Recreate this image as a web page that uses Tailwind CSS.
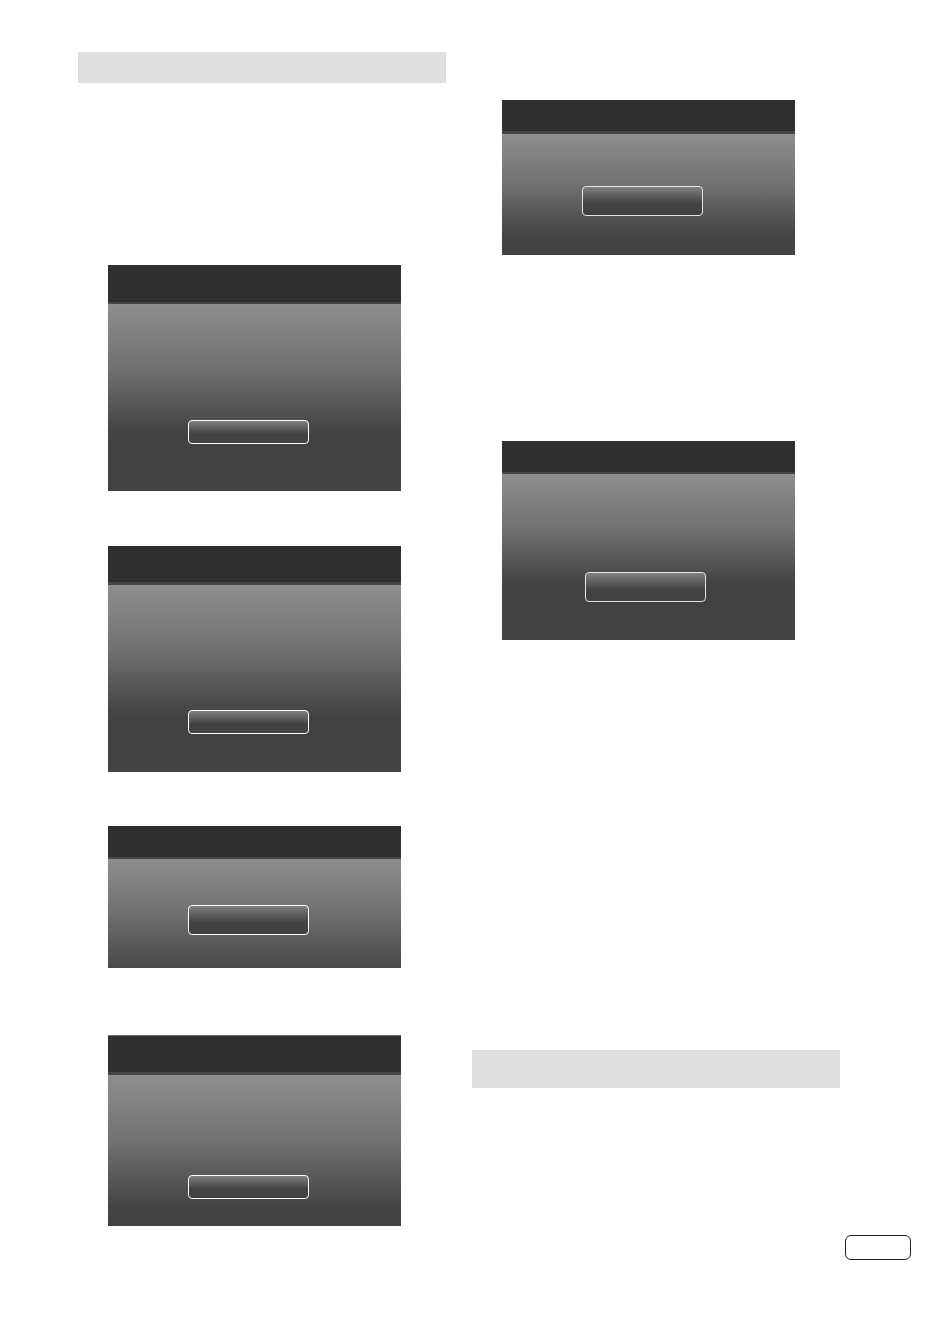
<!DOCTYPE html>
<html lang="en">
<head>
    <meta charset="UTF-8">
    <meta name="viewport" content="width=device-width, initial-scale=1.0">
    <title>Manual page</title>
    <script src="https://cdn.jsdelivr.net/npm/@tailwindcss/browser@4"></script>
</head>
<body class="bg-white text-black font-['Liberation_Sans',sans-serif]">

    <main class="grid grid-cols-2 gap-[26px] pt-[52px] pl-[78px] pr-[93px]">

        <!-- Left column -->
        <div>
            <!-- Section heading bar -->
            <div class="h-[31px] bg-[#dfdfdf]"></div>

            <section class="mt-[182px] ml-[30px] mr-[45px] bg-[#424242]">
                <header class="h-[39px] bg-[#2f2f2f] border-b-2 border-[#464646]"></header>
                <div class="h-[187px] pt-[116px] pl-20 bg-linear-to-b from-[#8e8e8e] via-[#707070] via-35% to-[#424242] to-70%">
                    <button type="button" aria-label="OK" class="block w-[121px] h-[24px] rounded border border-white bg-linear-to-b from-[#808080] to-[#424242] to-60%"></button>
                </div>
            </section>

            <section class="mt-[55px] ml-[30px] mr-[45px] bg-[#424242]">
                <header class="h-[39px] bg-[#2f2f2f] border-b-3 border-[#464646]"></header>
                <div class="h-[187px] pt-[125px] pl-20 bg-linear-to-b from-[#8e8e8e] via-[#707070] via-35% to-[#424242] to-70%">
                    <button type="button" aria-label="OK" class="block w-[121px] h-[24px] rounded border border-white bg-linear-to-b from-[#808080] to-[#424242] to-60%"></button>
                </div>
            </section>

            <section class="mt-[54px] ml-[30px] mr-[45px] bg-[#424242]">
                <header class="h-[33px] bg-[#2f2f2f] border-b-2 border-[#464646]"></header>
                <div class="h-[109px] pt-[46px] pl-20 bg-linear-to-b from-[#8e8e8e] via-[#707070] via-50% to-[#484848]">
                    <button type="button" aria-label="OK" class="block w-[121px] h-[30px] rounded border border-white bg-linear-to-b from-[#808080] to-[#424242] to-60%"></button>
                </div>
            </section>

            <section class="mt-[67px] ml-[30px] mr-[45px] bg-[#424242]">
                <header class="h-[40px] bg-[#2f2f2f] border-t border-t-[#707070] border-b-3 border-b-[#464646]"></header>
                <div class="h-[151px] pt-[100px] pl-20 bg-linear-to-b from-[#8e8e8e] via-[#707070] via-45% to-[#424242] to-90%">
                    <button type="button" aria-label="OK" class="block w-[121px] h-[24px] rounded border border-white bg-linear-to-b from-[#808080] to-[#424242] to-60%"></button>
                </div>
            </section>
        </div>

        <!-- Right column -->
        <div class="pt-12">
            <section class="ml-[30px] mr-[45px] bg-[#424242]">
                <header class="h-[34px] bg-[#2f2f2f] border-b-3 border-[#464646]"></header>
                <div class="h-[121px] pt-[52px] pl-20 bg-linear-to-b from-[#8e8e8e] via-[#707070] via-43% to-[#424242] to-86%">
                    <button type="button" aria-label="OK" class="block w-[121px] h-[30px] rounded border border-[#e4e4e4] bg-linear-to-b from-[#808080] to-[#424242] to-60%"></button>
                </div>
            </section>

            <section class="mt-[186px] ml-[30px] mr-[45px] bg-[#424242]">
                <header class="h-[33px] bg-[#2f2f2f] border-b-2 border-[#464646]"></header>
                <div class="h-[166px] pt-[98px] pl-[83px] bg-linear-to-b from-[#8e8e8e] via-[#707070] via-34% to-[#424242] to-67%">
                    <button type="button" aria-label="OK" class="block w-[121px] h-[30px] rounded border border-[#e4e4e4] bg-linear-to-b from-[#808080] to-[#424242] to-60%"></button>
                </div>
            </section>

            <!-- Section heading bar -->
            <div class="mt-[410px] h-[38px] bg-[#dfdfdf]"></div>
        </div>
    </main>

    <!-- Page number tab -->
    <footer class="flex justify-end mt-[9px] pr-[22px] pb-10">
        <div class="w-[66px] h-[25px] rounded-md border border-[#222222]"></div>
    </footer>

</body>
</html>
